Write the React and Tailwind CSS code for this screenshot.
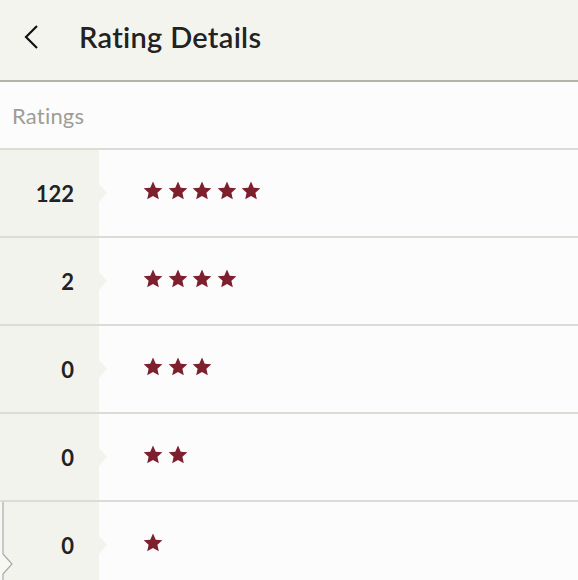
import React from 'react';

const rows = [
  { count: 122, stars: 5 },
  { count: 2, stars: 4 },
  { count: 0, stars: 3 },
  { count: 0, stars: 2 },
  { count: 0, stars: 1 },
];

function Star() {
  return (
    <svg viewBox="0 0 20 20" className="w-[20px] h-[20px]">
      <path
        d="M10 0.6l2.75 6.05 6.6.65-4.95 4.45 1.4 6.55L10 15l-5.8 3.3 1.4-6.55L0.65 7.3l6.6-.65z"
        fill="#7d1f2d"
      />
    </svg>
  );
}

function RatingRow({ count, stars, last }) {
  return (
    <div className="relative flex h-[88px] border-t-2 border-[#dcdcd6]">
      <div className="relative w-[99px] shrink-0 bg-[#f3f3ee] flex items-center justify-end pr-[25px]">
        <span className="text-[22px] font-bold text-[#222]">{count}</span>
        {/* notch */}
        <div className="absolute -right-[8px] top-1/2 -translate-y-1/2 w-0 h-0 border-y-[9px] border-y-transparent border-l-[8px] border-l-[#f3f3ee]" />
      </div>
      <div className="flex items-center gap-[4.5px] pl-[44px] -mt-[4px]">
        {Array.from({ length: stars }).map((_, i) => (
          <Star key={i} />
        ))}
      </div>
      {last && (
        <svg className="absolute left-0 top-0 w-[14px] h-[88px]" viewBox="0 0 14 88">
          <path d="M0 0 H3 V52 L12 62 L3 72 V88 H0 Z" fill="#f7f7f4" />
          <path d="M3 0 V 52 L 12 62 L 3 72 V 88" fill="none" stroke="#a9a9a9" strokeWidth="1.2" />
        </svg>
      )}
    </div>
  );
}

export default function App() {
  return (
    <div className="w-[578px] h-[580px] overflow-hidden bg-[#fcfcfc]" style={{ fontFamily: 'Lato, "Noto Sans", sans-serif' }}>
      <header className="h-[82px] bg-[#f4f4ef] border-b-2 border-[#b3b3ab] flex items-center">
        <svg viewBox="0 0 16 26" className="ml-[23px] w-[16px] h-[26px] -mt-[6px]">
          <path d="M14 2 L3 13 L14 24" fill="none" stroke="#111" strokeWidth="2.2" />
        </svg>
        <h1 className="ml-[40px] -mt-[7px] text-[29px] font-semibold text-[#222] tracking-[0.3px]">Rating Details</h1>
      </header>
      <div className="h-[66px] flex items-center pl-[12px]">
        <span className="text-[22px] text-[#9d9d96] tracking-[0.2px]">Ratings</span>
      </div>
      {rows.map((r, i) => (
        <RatingRow key={i} {...r} last={i === rows.length - 1} />
      ))}
    </div>
  );
}
